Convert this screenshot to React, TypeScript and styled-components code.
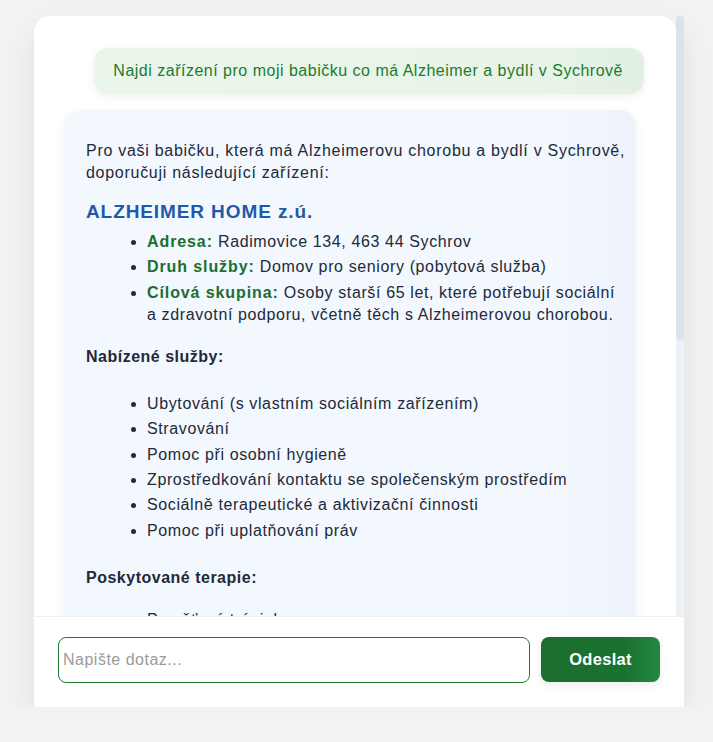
import React from "react";
import styled, { createGlobalStyle } from "styled-components";

const Global = createGlobalStyle`
  html, body { margin: 0; padding: 0; background: #f1f2f2; }
  body { font-family: "Liberation Sans", Arial, Helvetica, sans-serif; }
`;

const Page = styled.div`
  padding: 16px 29px 0 34px;
`;

const Card = styled.div`
  width: 650px;
  height: 691px;
  box-shadow: 0 12px 32px rgba(0, 0, 0, 0.07);
  border-radius: 16px 16px 0 0;
  display: flex;
  flex-direction: column;
`;

const Upper = styled.div`
  flex: 1;
  min-height: 0;
  display: flex;
`;

const Messages = styled.div`
  flex: 1;
  min-width: 0;
  overflow: hidden;
  background: #ffffff;
  border-radius: 16px 16px 0 0;
  padding: 32px 32px 24px 30px;
  display: flex;
  flex-direction: column;
  gap: 16px;
`;

const ScrollTrack = styled.div`
  width: 8px;
  flex-shrink: 0;
  background: #eef1f5;
  display: flex;
  flex-direction: column;
`;

const ScrollThumb = styled.div`
  width: 8px;
  border-radius: 4px;
  background: #dae2ec;
`;

const UserBubble = styled.div`
  align-self: flex-end;
  background: linear-gradient(90deg, #eaf6ea 0%, #e8f4e8 80%, #e1f0e3 100%);
  color: #1e7a30;
  font-size: 16px;
  letter-spacing: 0.5px;
  line-height: 22px;
  padding: 12px 21px 12px 19px;
  border-radius: 14px;
  box-shadow: 0 3px 10px rgba(0, 0, 0, 0.06);
  flex-shrink: 0;
  white-space: nowrap;
`;

const BotBubble = styled.div`
  align-self: flex-start;
  width: 572px;
  box-sizing: border-box;
  background: linear-gradient(90deg, #f3f7fe 0%, #f3f7fe 85%, #eef3fb 100%);
  color: #222a38;
  font-size: 16px;
  letter-spacing: 0.62px;
  line-height: 22.4px;
  padding: 30px 8px 24px 22px;
  border-radius: 16px;
  box-shadow: 0 3px 12px rgba(0, 0, 0, 0.05);
  flex-shrink: 0;
`;

const Para = styled.p`
  margin: 0 0 14px 0;
  letter-spacing: 0.72px;
`;

const FacilityTitle = styled.h3`
  margin: 0 0 7px 0;
  font-size: 19px;
  letter-spacing: 0.9px;
  line-height: 25px;
  font-weight: 700;
  color: #1f5aa8;
`;

const SectionTitle = styled.p<{ $top: number; $bottom: number }>`
  margin: ${(p) => p.$top}px 0 ${(p) => p.$bottom}px 0;
  font-weight: 700;
  letter-spacing: 0.5px;
`;

const List = styled.ul`
  margin: 0;
  padding: 0 6px 0 61px;
`;

const Item = styled.li`
  margin-bottom: 3px;
`;

const Label = styled.strong`
  color: #1b6e2e;
  letter-spacing: 0.9px;
`;

const InputBar = styled.div`
  flex-shrink: 0;
  background: #ffffff;
  border-top: 1px solid #eceef1;
  padding: 20px 24px 24px 24px;
  display: flex;
  gap: 11px;
  align-items: flex-start;
`;

const TextInput = styled.input`
  flex: 1;
  height: 46px;
  box-sizing: border-box;
  border: 1px solid #1e7a30;
  border-radius: 8px;
  padding: 0 4px;
  font-family: "Liberation Sans", Arial, sans-serif;
  font-size: 16px;
  letter-spacing: 0.5px;
  color: #222;
  outline: none;
  caret-color: #1a5fe0;
  &::placeholder { color: #9b9b9b; }
`;

const SendButton = styled.button`
  width: 119px;
  height: 45px;
  border: none;
  border-radius: 8px;
  background: linear-gradient(90deg, #1b6e2e 0%, #1b722f 70%, #21893f 100%);
  color: #fff;
  font-family: "Liberation Sans", Arial, sans-serif;
  font-weight: 700;
  font-size: 16.5px;
  letter-spacing: 0.3px;
  box-shadow: 0 3px 8px rgba(0, 0, 0, 0.08);
  cursor: pointer;
`;

const services = [
  "Ubytování (s vlastním sociálním zařízením)",
  "Stravování",
  "Pomoc při osobní hygieně",
  "Zprostředkování kontaktu se společenským prostředím",
  "Sociálně terapeutické a aktivizační činnosti",
  "Pomoc při uplatňování práv",
];

const therapies = [
  "Paměťový trénink",
  "Reminiscenční terapie",
  "Muzikoterapie",
  "Canisterapie",
  "Ergoterapie",
];

const contacts = [
  ["Telefon:", "+420 481 313 211"],
  ["E-mail:", "info@alzheimerhome.cz"],
];

export default function App() {
  return (
    <>
      <Global />
      <Page>
        <Card>
          <Upper>
            <Messages>
              <UserBubble>Najdi zařízení pro moji babičku co má Alzheimer a bydlí v Sychrově</UserBubble>
              <BotBubble>
                <Para>
                  Pro vaši babičku, která má Alzheimerovu chorobu a bydlí v Sychrově, doporučuji následující zařízení:
                </Para>
                <FacilityTitle>ALZHEIMER HOME z.ú.</FacilityTitle>
                <List>
                  <Item><Label>Adresa:</Label> Radimovice 134, 463 44 Sychrov</Item>
                  <Item><Label>Druh služby:</Label> Domov pro seniory (pobytová služba)</Item>
                  <Item>
                    <Label>Cílová skupina:</Label> Osoby starší 65 let, které potřebují sociální a zdravotní podporu, včetně těch s Alzheimerovou chorobou.
                  </Item>
                </List>
                <SectionTitle $top={20} $bottom={24}>Nabízené služby:</SectionTitle>
                <List>
                  {services.map((s) => (
                    <Item key={s}>{s}</Item>
                  ))}
                </List>
                <SectionTitle $top={25} $bottom={19}>Poskytované terapie:</SectionTitle>
                <List>
                  {therapies.map((s) => (
                    <Item key={s}>{s}</Item>
                  ))}
                </List>
                <SectionTitle $top={20} $bottom={22}>Kontakt:</SectionTitle>
                <List>
                  {contacts.map(([l, v]) => (
                    <Item key={l}><Label>{l}</Label> {v}</Item>
                  ))}
                </List>
              </BotBubble>
            </Messages>
            <ScrollTrack>
              <ScrollThumb style={{ height: 324 }} />
            </ScrollTrack>
          </Upper>
          <InputBar>
            <TextInput placeholder="Napište dotaz..." autoFocus />
            <SendButton>Odeslat</SendButton>
          </InputBar>
        </Card>
      </Page>
    </>
  );
}
